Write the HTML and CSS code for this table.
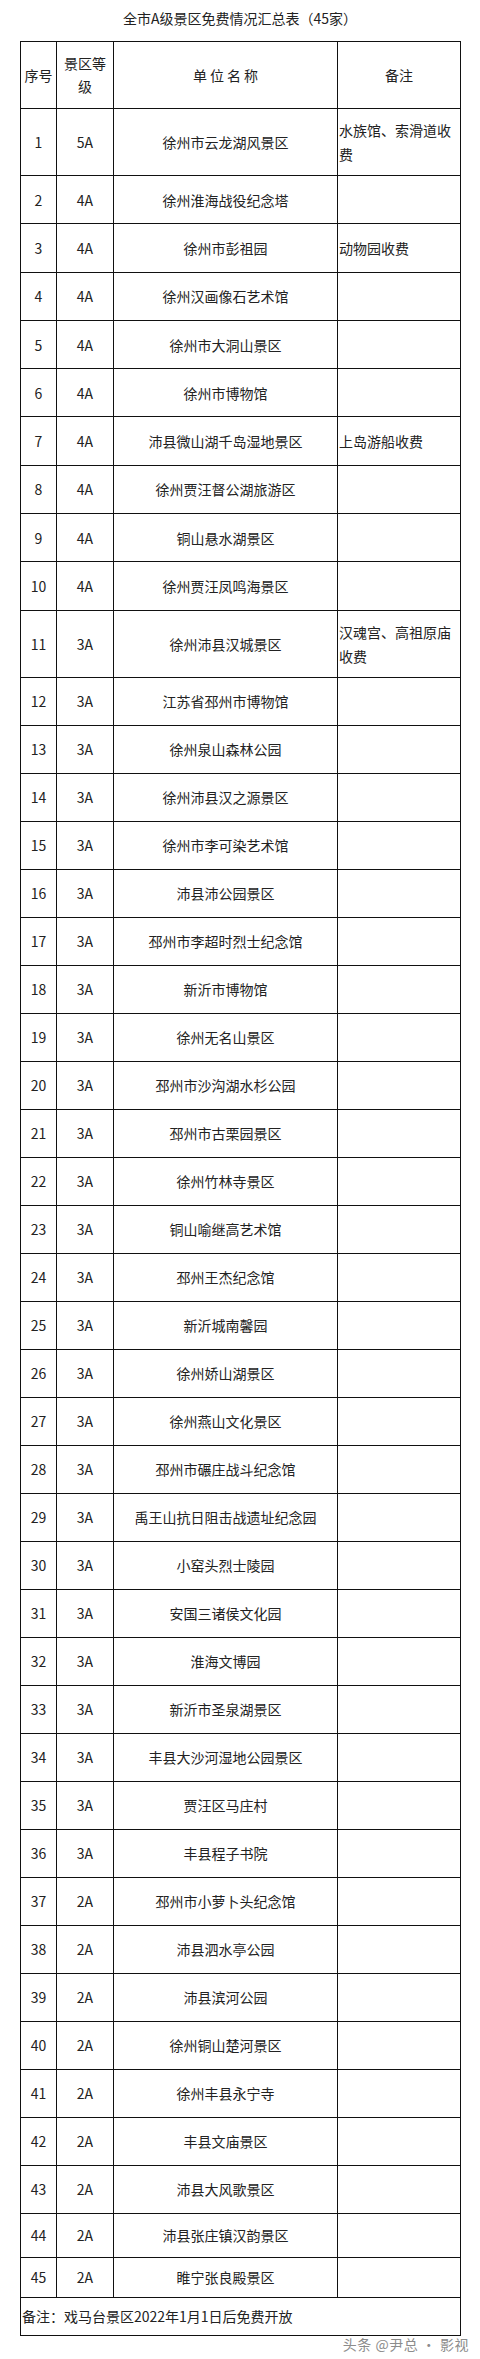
FILE: index.html
```html
<!DOCTYPE html>
<html lang="zh-CN">
<head>
<meta charset="utf-8">
<title>全市A级景区免费情况汇总表</title>
<link rel="stylesheet" href="styles.css">
</head>
<body>
<div class="title">全市A级景区免费情况汇总表（45家）</div>
<table class="sheet">
<colgroup><col class="c1"><col class="c2"><col class="c3"><col class="c4"></colgroup>
<tr class="tall"><td>序号</td><td class="grade-h">景区等<br>级</td><td class="spaced">单位名称</td><td>备注</td></tr>
<tr class="tall"><td>1</td><td>5A</td><td>徐州市云龙湖风景区</td><td class="note">水族馆、索滑道收费</td></tr>
<tr class="mid"><td>2</td><td>4A</td><td>徐州淮海战役纪念塔</td><td class="note"></td></tr>
<tr class="mid"><td>3</td><td>4A</td><td>徐州市彭祖园</td><td class="note">动物园收费</td></tr>
<tr class="mid"><td>4</td><td>4A</td><td>徐州汉画像石艺术馆</td><td class="note"></td></tr>
<tr class="mid"><td>5</td><td>4A</td><td>徐州市大洞山景区</td><td class="note"></td></tr>
<tr class="mid"><td>6</td><td>4A</td><td>徐州市博物馆</td><td class="note"></td></tr>
<tr class="mid"><td>7</td><td>4A</td><td>沛县微山湖千岛湿地景区</td><td class="note">上岛游船收费</td></tr>
<tr class="mid"><td>8</td><td>4A</td><td>徐州贾汪督公湖旅游区</td><td class="note"></td></tr>
<tr class="mid"><td>9</td><td>4A</td><td>铜山悬水湖景区</td><td class="note"></td></tr>
<tr class="mid"><td>10</td><td>4A</td><td>徐州贾汪凤鸣海景区</td><td class="note"></td></tr>
<tr class="tall"><td>11</td><td>3A</td><td>徐州沛县汉城景区</td><td class="note">汉魂宫、高祖原庙收费</td></tr>
<tr><td>12</td><td>3A</td><td>江苏省邳州市博物馆</td><td class="note"></td></tr>
<tr><td>13</td><td>3A</td><td>徐州泉山森林公园</td><td class="note"></td></tr>
<tr><td>14</td><td>3A</td><td>徐州沛县汉之源景区</td><td class="note"></td></tr>
<tr><td>15</td><td>3A</td><td>徐州市李可染艺术馆</td><td class="note"></td></tr>
<tr><td>16</td><td>3A</td><td>沛县沛公园景区</td><td class="note"></td></tr>
<tr><td>17</td><td>3A</td><td>邳州市李超时烈士纪念馆</td><td class="note"></td></tr>
<tr><td>18</td><td>3A</td><td>新沂市博物馆</td><td class="note"></td></tr>
<tr><td>19</td><td>3A</td><td>徐州无名山景区</td><td class="note"></td></tr>
<tr><td>20</td><td>3A</td><td>邳州市沙沟湖水杉公园</td><td class="note"></td></tr>
<tr><td>21</td><td>3A</td><td>邳州市古栗园景区</td><td class="note"></td></tr>
<tr><td>22</td><td>3A</td><td>徐州竹林寺景区</td><td class="note"></td></tr>
<tr><td>23</td><td>3A</td><td>铜山喻继高艺术馆</td><td class="note"></td></tr>
<tr><td>24</td><td>3A</td><td>邳州王杰纪念馆</td><td class="note"></td></tr>
<tr><td>25</td><td>3A</td><td>新沂城南馨园</td><td class="note"></td></tr>
<tr><td>26</td><td>3A</td><td>徐州娇山湖景区</td><td class="note"></td></tr>
<tr><td>27</td><td>3A</td><td>徐州燕山文化景区</td><td class="note"></td></tr>
<tr><td>28</td><td>3A</td><td>邳州市碾庄战斗纪念馆</td><td class="note"></td></tr>
<tr><td>29</td><td>3A</td><td>禹王山抗日阻击战遗址纪念园</td><td class="note"></td></tr>
<tr><td>30</td><td>3A</td><td>小窑头烈士陵园</td><td class="note"></td></tr>
<tr><td>31</td><td>3A</td><td>安国三诸侯文化园</td><td class="note"></td></tr>
<tr><td>32</td><td>3A</td><td>淮海文博园</td><td class="note"></td></tr>
<tr><td>33</td><td>3A</td><td>新沂市圣泉湖景区</td><td class="note"></td></tr>
<tr><td>34</td><td>3A</td><td>丰县大沙河湿地公园景区</td><td class="note"></td></tr>
<tr><td>35</td><td>3A</td><td>贾汪区马庄村</td><td class="note"></td></tr>
<tr><td>36</td><td>3A</td><td>丰县程子书院</td><td class="note"></td></tr>
<tr><td>37</td><td>2A</td><td>邳州市小萝卜头纪念馆</td><td class="note"></td></tr>
<tr><td>38</td><td>2A</td><td>沛县泗水亭公园</td><td class="note"></td></tr>
<tr><td>39</td><td>2A</td><td>沛县滨河公园</td><td class="note"></td></tr>
<tr><td>40</td><td>2A</td><td>徐州铜山楚河景区</td><td class="note"></td></tr>
<tr><td>41</td><td>2A</td><td>徐州丰县永宁寺</td><td class="note"></td></tr>
<tr><td>42</td><td>2A</td><td>丰县文庙景区</td><td class="note"></td></tr>
<tr><td>43</td><td>2A</td><td>沛县大风歌景区</td><td class="note"></td></tr>
<tr class="r44"><td>44</td><td>2A</td><td>沛县张庄镇汉韵景区</td><td class="note"></td></tr>
<tr class="r45"><td>45</td><td>2A</td><td>睢宁张良殿景区</td><td class="note"></td></tr>
<tr class="foot"><td colspan="4" class="foot-cell">备注：戏马台景区2022年1月1日后免费开放</td></tr>
</table>
<div class="watermark">头条 @尹总 · 影视</div>
</body>
</html>
```

FILE: styles.css
```css
html, body {
  margin: 0;
  padding: 0;
  background: #fff;
}
body {
  font-family: "Noto Sans CJK SC", "Noto Sans", sans-serif;
  color: #222;
  font-size: 14px;
}
.title {
  height: 41px;
  box-sizing: border-box;
  padding-top: 8px;
  line-height: 20px;
  text-align: center;
  font-size: 14px;
}
.sheet {
  margin-left: 20px;
  width: 441px;
  border-collapse: collapse;
  table-layout: fixed;
}
.c1 { width: 36px; }
.c2 { width: 57px; }
.c3 { width: 224px; }
.c4 { width: 123px; }
.sheet td {
  border: 1px solid #111;
  height: 47px;
  padding: 0;
  text-align: center;
  vertical-align: middle;
  line-height: 24px;
  font-size: 14px;
}
.sheet tr.tall td { height: 66px; }
.sheet tr.mid td { height: 47.3px; }
.sheet tr.r44 td { height: 43px; }
.sheet tr.r45 td { height: 39px; }
.sheet tr.foot td { height: 37px; }
.sheet td.grade-h { line-height: 23px; }
.sheet td.spaced {
  letter-spacing: 3px;
  padding-left: 3px;
}
.sheet td.note {
  text-align: left;
  padding-left: 1px;
}
.sheet td.foot-cell {
  text-align: left;
  padding-left: 1px;
}
.watermark {
  text-align: right;
  padding-right: 11px;
  font-size: 14px;
  line-height: 16px;
  color: #8c8c8c;
  letter-spacing: 0.5px;
}
```
